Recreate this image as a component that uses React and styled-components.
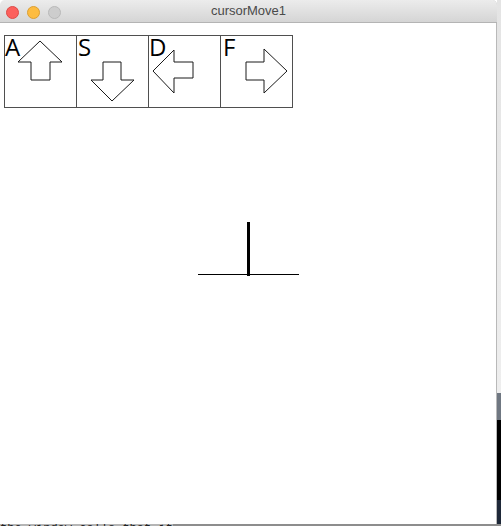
import React from "react";
import styled, { createGlobalStyle } from "styled-components";

const Global = createGlobalStyle`
  html, body { margin: 0; padding: 0; background: #ffffff; }
  #root { width: 501px; height: 526px; overflow: hidden; }
`;

const Screen = styled.div`
  width: 501px;
  height: 526px;
  display: grid;
  grid-template-columns: 497px 4px;
  grid-template-rows: 524px 2px;
  overflow: hidden;
`;

const Window = styled.div`
  display: flex;
  flex-direction: column;
  background: #ffffff;
  border-radius: 5px 5px 0 0;
  box-shadow: inset -1px 0 0 #b9b9b9;
  overflow: hidden;
`;

const TitleBar = styled.div`
  position: relative;
  height: 22px;
  flex: none;
  border-bottom: 1px solid #b4b4b4;
  background: linear-gradient(#ececec, #d5d5d5);
  display: flex;
  align-items: center;
  justify-content: center;
`;

const Lights = styled.div`
  position: absolute;
  left: 6px;
  top: 6px;
  display: flex;
  gap: 8px;
`;

const Light = styled.span`
  width: 11px;
  height: 11px;
  border-radius: 50%;
  background: ${(p) => p.$fill};
  border: 0.5px solid ${(p) => p.$edge};
`;

const Title = styled.div`
  font-family: "Liberation Sans", Arial, sans-serif;
  font-size: 13px;
  color: #4a4a4a;
  line-height: 22px;
`;

const Content = styled.div`
  flex: 1;
  display: flex;
  flex-direction: column;
`;

const KeyRow = styled.div`
  display: flex;
  margin: 12px 0 0 4px;
`;

const Key = styled.div`
  position: relative;
  width: 71px;
  height: 71px;
  border: 1px solid #4f4f4f;
  & + & { margin-left: -1px; }
`;

const Letter = styled.span`
  position: absolute;
  left: ${(p) => p.$x}px;
  top: -1px;
  font-family: "Open Sans", "Liberation Sans", sans-serif;
  font-size: 24px;
  line-height: 24px;
  color: #000;
`;

const ArrowSvg = styled.svg`
  position: absolute;
  left: -1px;
  top: -1px;
  width: 73px;
  height: 73px;
`;

const Cross = styled.svg`
  display: block;
  margin: 114px 0 0 198px;
  width: 101px;
  height: 55px;
`;

const RightStrip = styled.div`
  background: linear-gradient(
    #e4e4e4 0px,
    #eeeeee 393px,
    #6f7781 393px,
    #6f7781 420px,
    #000000 420px,
    #000000 500px,
    #1e2838 500px
  );
`;

const BottomStrip = styled.div`
  grid-column: 1 / span 2;
  background: #8d8d8d;
  position: relative;
  overflow: hidden;
`;

const Peek = styled.span`
  position: absolute;
  left: 0;
  top: -1px;
  font-family: "Liberation Mono", monospace;
  font-size: 12px;
  line-height: 12px;
  color: #222;
  background: #b5b5b5;
  white-space: nowrap;
`;

const arrows = [
  { k: "A", x: 0, pts: "36,6 58,27 46,27 46,45 27,45 27,27 14,27" },
  { k: "S", x: 1, pts: "27,27 45,27 45,45 58,45 36,66 15,45 27,45" },
  { k: "D", x: 0, pts: "5,36 26,15 26,27 45,27 45,43 26,43 26,58" },
  { k: "F", x: 2, pts: "67,36 44,14 44,27 26,27 26,45 44,45 44,58" },
];

export default function App() {
  return (
    <>
      <Global />
      <Screen>
        <Window>
          <TitleBar>
            <Lights>
              <Light $fill="#fc605c" $edge="#dd4b47" />
              <Light $fill="#fdbc40" $edge="#dc9f32" />
              <Light $fill="#cdcdcd" $edge="#b9b9b9" />
            </Lights>
            <Title>cursorMove1</Title>
          </TitleBar>
          <Content>
            <KeyRow>
              {arrows.map((a) => (
                <Key key={a.k}>
                  <ArrowSvg viewBox="0 0 73 73">
                    <polygon
                      points={a.pts}
                      fill="#ffffff"
                      stroke="#1a1a1a"
                      strokeWidth="1"
                    />
                  </ArrowSvg>
                  <Letter $x={a.x}>{a.k}</Letter>
                </Key>
              ))}
            </KeyRow>
            <Cross viewBox="0 0 101 55">
              <line x1="0" y1="52.5" x2="101" y2="52.5" stroke="#000" strokeWidth="1" />
              <rect x="49" y="0" width="3" height="54" fill="#000" />
            </Cross>
          </Content>
        </Window>
        <RightStrip />
        <BottomStrip>
          <Peek>the window calls that it</Peek>
        </BottomStrip>
      </Screen>
    </>
  );
}
